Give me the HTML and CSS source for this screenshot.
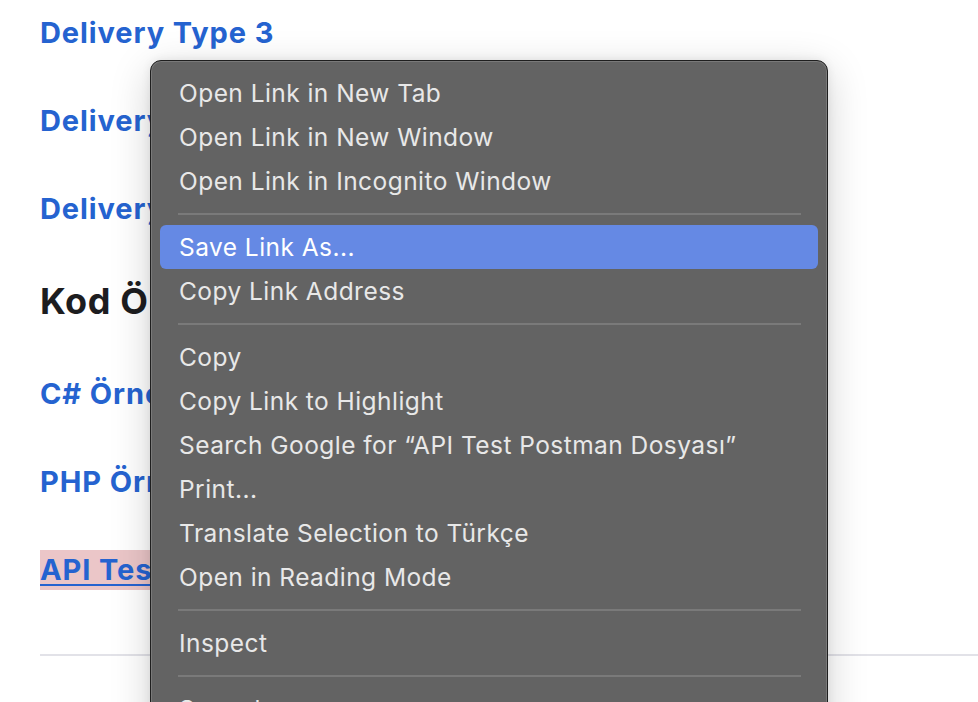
FILE: index.html
```html
<!DOCTYPE html>
<html lang="tr">
<head>
<meta charset="utf-8">
<title>Delivery</title>
<link rel="stylesheet" href="styles.css">
</head>
<body>
<main class="page">
  <a class="doc-link" href="#">Delivery Type 3</a>
  <a class="doc-link" href="#">Delivery Type 4</a>
  <a class="doc-link" href="#">Delivery Type 5</a>
  <h2 class="section-title">Kod Örnekleri</h2>
  <a class="doc-link" href="#">C# Örneği</a>
  <a class="doc-link" href="#">PHP Örneği</a>
  <a class="doc-link selected" href="#">API Test Postman Dosyası</a>
  <hr class="rule">
</main>

<div class="context-menu">
  <div class="item">Open Link in New Tab</div>
  <div class="item">Open Link in New Window</div>
  <div class="item">Open Link in Incognito Window</div>
  <div class="sep"></div>
  <div class="item active">Save Link As...</div>
  <div class="item">Copy Link Address</div>
  <div class="sep"></div>
  <div class="item">Copy</div>
  <div class="item">Copy Link to Highlight</div>
  <div class="item">Search Google for “API Test Postman Dosyası”</div>
  <div class="item">Print...</div>
  <div class="item">Translate Selection to Türkçe</div>
  <div class="item">Open in Reading Mode</div>
  <div class="sep"></div>
  <div class="item">Inspect</div>
  <div class="sep"></div>
  <div class="item sub">Speech
    <svg class="chev" width="10" height="16" viewBox="0 0 10 16"><path d="M2 2 L8 8 L2 14" fill="none" stroke="#e6e6e6" stroke-width="2" stroke-linecap="round" stroke-linejoin="round"/></svg>
  </div>
</div>
</body>
</html>
```

FILE: styles.css
```css
html, body {
  margin: 0;
  padding: 0;
  background: #ffffff;
  overflow: hidden;
  height: 702px;
}

.page {
  display: flex;
  flex-direction: column;
  align-items: flex-start;
  padding: 13px 0 0 40px;
  font-family: Inter, "Noto Sans", sans-serif;
}

.doc-link {
  display: block;
  font-size: 29px;
  font-weight: 700;
  line-height: 40px;
  letter-spacing: 0.9px;
  color: #2563d0;
  text-decoration: none;
  margin-bottom: 48px;
  white-space: nowrap;
}

.section-title {
  margin: 2px 0 51px 0;
  font-size: 36px;
  line-height: 44px;
  font-weight: 700;
  letter-spacing: 0.6px;
  color: #1d1d1f;
  white-space: nowrap;
}

.doc-link.selected {
  background: #ebc6c8;
  text-decoration: underline;
  text-decoration-thickness: 2px;
  text-underline-offset: 4px;
  margin-bottom: 0;
}

.rule {
  align-self: stretch;
  border: none;
  border-top: 2px solid #e2e2e8;
  margin: 64px 0 0 0;
}

.context-menu {
  position: absolute;
  left: 150px;
  top: 60px;
  width: 678px;
  height: 700px;
  background: #636363;
  border: 1px solid #1f1f1f;
  border-radius: 11px;
  box-shadow: inset 0 0 0 1px rgba(255,255,255,0.14), 0 10px 40px rgba(0,0,0,0.18), 0 0 10px rgba(0,0,0,0.08);
  padding: 10px 9px 0 9px;
  box-sizing: border-box;
  font-family: Inter, "Noto Sans", sans-serif;
  font-size: 24.5px;
  letter-spacing: 0.45px;
  color: #e8e8e8;
}

.item {
  height: 44px;
  display: flex;
  align-items: center;
  padding-left: 19px;
  border-radius: 6px;
  white-space: nowrap;
}

.item.active {
  background: #6589e4;
  color: #ffffff;
}

.sep {
  height: 22px;
  display: flex;
  align-items: center;
  padding: 0 17px 0 18px;
}

.sep::before {
  content: "";
  flex: 1;
  height: 2px;
  background: #7a7a7a;
}

.item.sub {
  justify-content: space-between;
  padding-right: 30px;
}

.chev {
  display: block;
}
```
